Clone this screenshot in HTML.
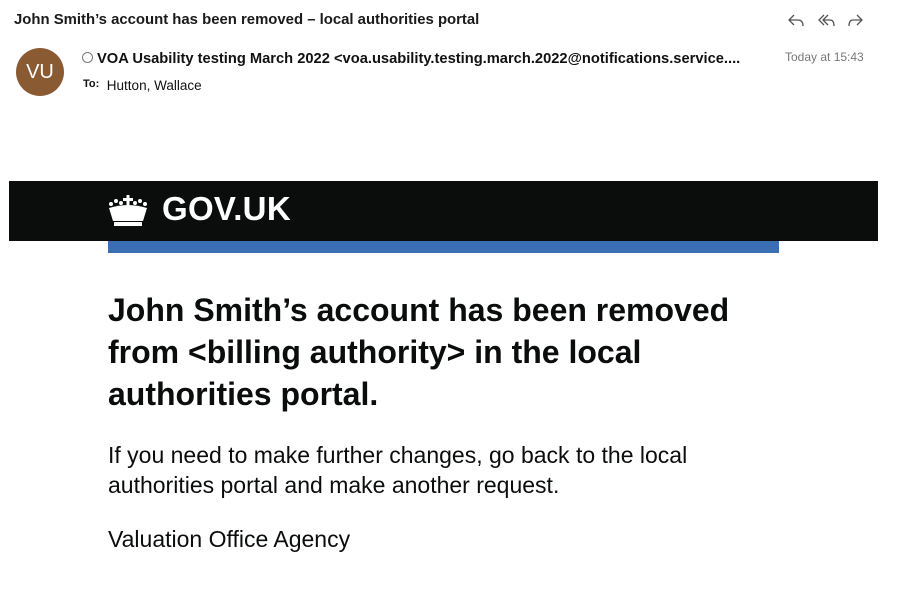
<!DOCTYPE html>
<html><head><meta charset="utf-8"><style>
body{margin:0;width:906px;height:610px;background:#fff;font-family:"Liberation Sans",Arial,sans-serif;position:relative;overflow:hidden;color:#000}
.a{position:absolute;white-space:nowrap}
</style></head><body>
<div class="a" style="left:14px;top:12px;font-size:14.9px;font-weight:bold;color:#1a1a1a">John Smith’s account has been removed – local authorities portal</div>
<svg class="a" style="left:786px;top:12px" width="86" height="18" viewBox="0 0 86 18" fill="none" stroke="#555" stroke-width="1.3">
<path d="M8 3 L3 8 L8 13 M3 8 H12 Q17 8 17 14"/>
<path d="M38 3 L33 8 L38 13 M42 3 L37 8 L42 13 M37 8 H44 Q48 8 48 14"/>
<path d="M71 3 L76 8 L71 13 M76 8 H67 Q63 8 63 14"/>
</svg>
<div class="a" style="left:16px;top:48px;width:48px;height:48px;border-radius:50%;background:#8a5a32;color:#fff;font-size:20px;line-height:48px;text-align:center">VU</div>
<div class="a" style="left:82px;top:51px;font-size:14.7px;color:#111"><span style="display:inline-block;width:9px;height:9px;border:1px solid #777;border-radius:50%;margin-right:4px"></span><b>VOA Usability testing March 2022 &lt;voa.usability.testing.march.2022@notifications.service....</b></div>
<div class="a" style="left:785px;top:50px;font-size:12px;color:#777">Today at 15:43</div>
<div class="a" style="left:83px;top:78px;font-size:13.5px;color:#111"><span style="font-size:11px;font-weight:bold;vertical-align:top">To:</span>&nbsp; Hutton, Wallace</div>
<div class="a" style="left:9px;top:181px;width:869px;height:60px;background:#0b0c0c"></div>
<svg class="a" style="left:107px;top:194px" width="42" height="34" viewBox="0 0 42 34" fill="#fff">
<rect x="19.5" y="1" width="3" height="10"/><rect x="16" y="4" width="10" height="3"/>
<circle cx="4" cy="10" r="2"/><circle cx="9" cy="7" r="2"/><circle cx="14" cy="9" r="2"/><circle cx="28" cy="9" r="2"/><circle cx="33" cy="7" r="2"/><circle cx="38" cy="10" r="2"/>
<path d="M2 14 Q21 8 40 14 L36 27 H6 Z"/><rect x="7" y="28" width="28" height="4"/>
</svg>
<div class="a" style="left:162px;top:190px;font-size:33px;font-weight:bold;color:#fff;letter-spacing:0.3px">GOV.UK</div>
<div class="a" style="left:108px;top:241px;width:671px;height:12px;background:#3a6fb6"></div>
<div class="a" style="left:108px;top:289px;font-size:32px;font-weight:bold;line-height:42px;color:#0b0c0c">John Smith’s account has been removed<br>from &lt;billing authority&gt; in the local<br>authorities portal.</div>
<div class="a" style="left:108px;top:440px;font-size:23px;line-height:30px;color:#0b0c0c">If you need to make further changes, go back to the local<br>authorities portal and make another request.</div>
<div class="a" style="left:108px;top:524px;font-size:23px;line-height:30px;color:#0b0c0c">Valuation Office Agency</div>
</body></html>
